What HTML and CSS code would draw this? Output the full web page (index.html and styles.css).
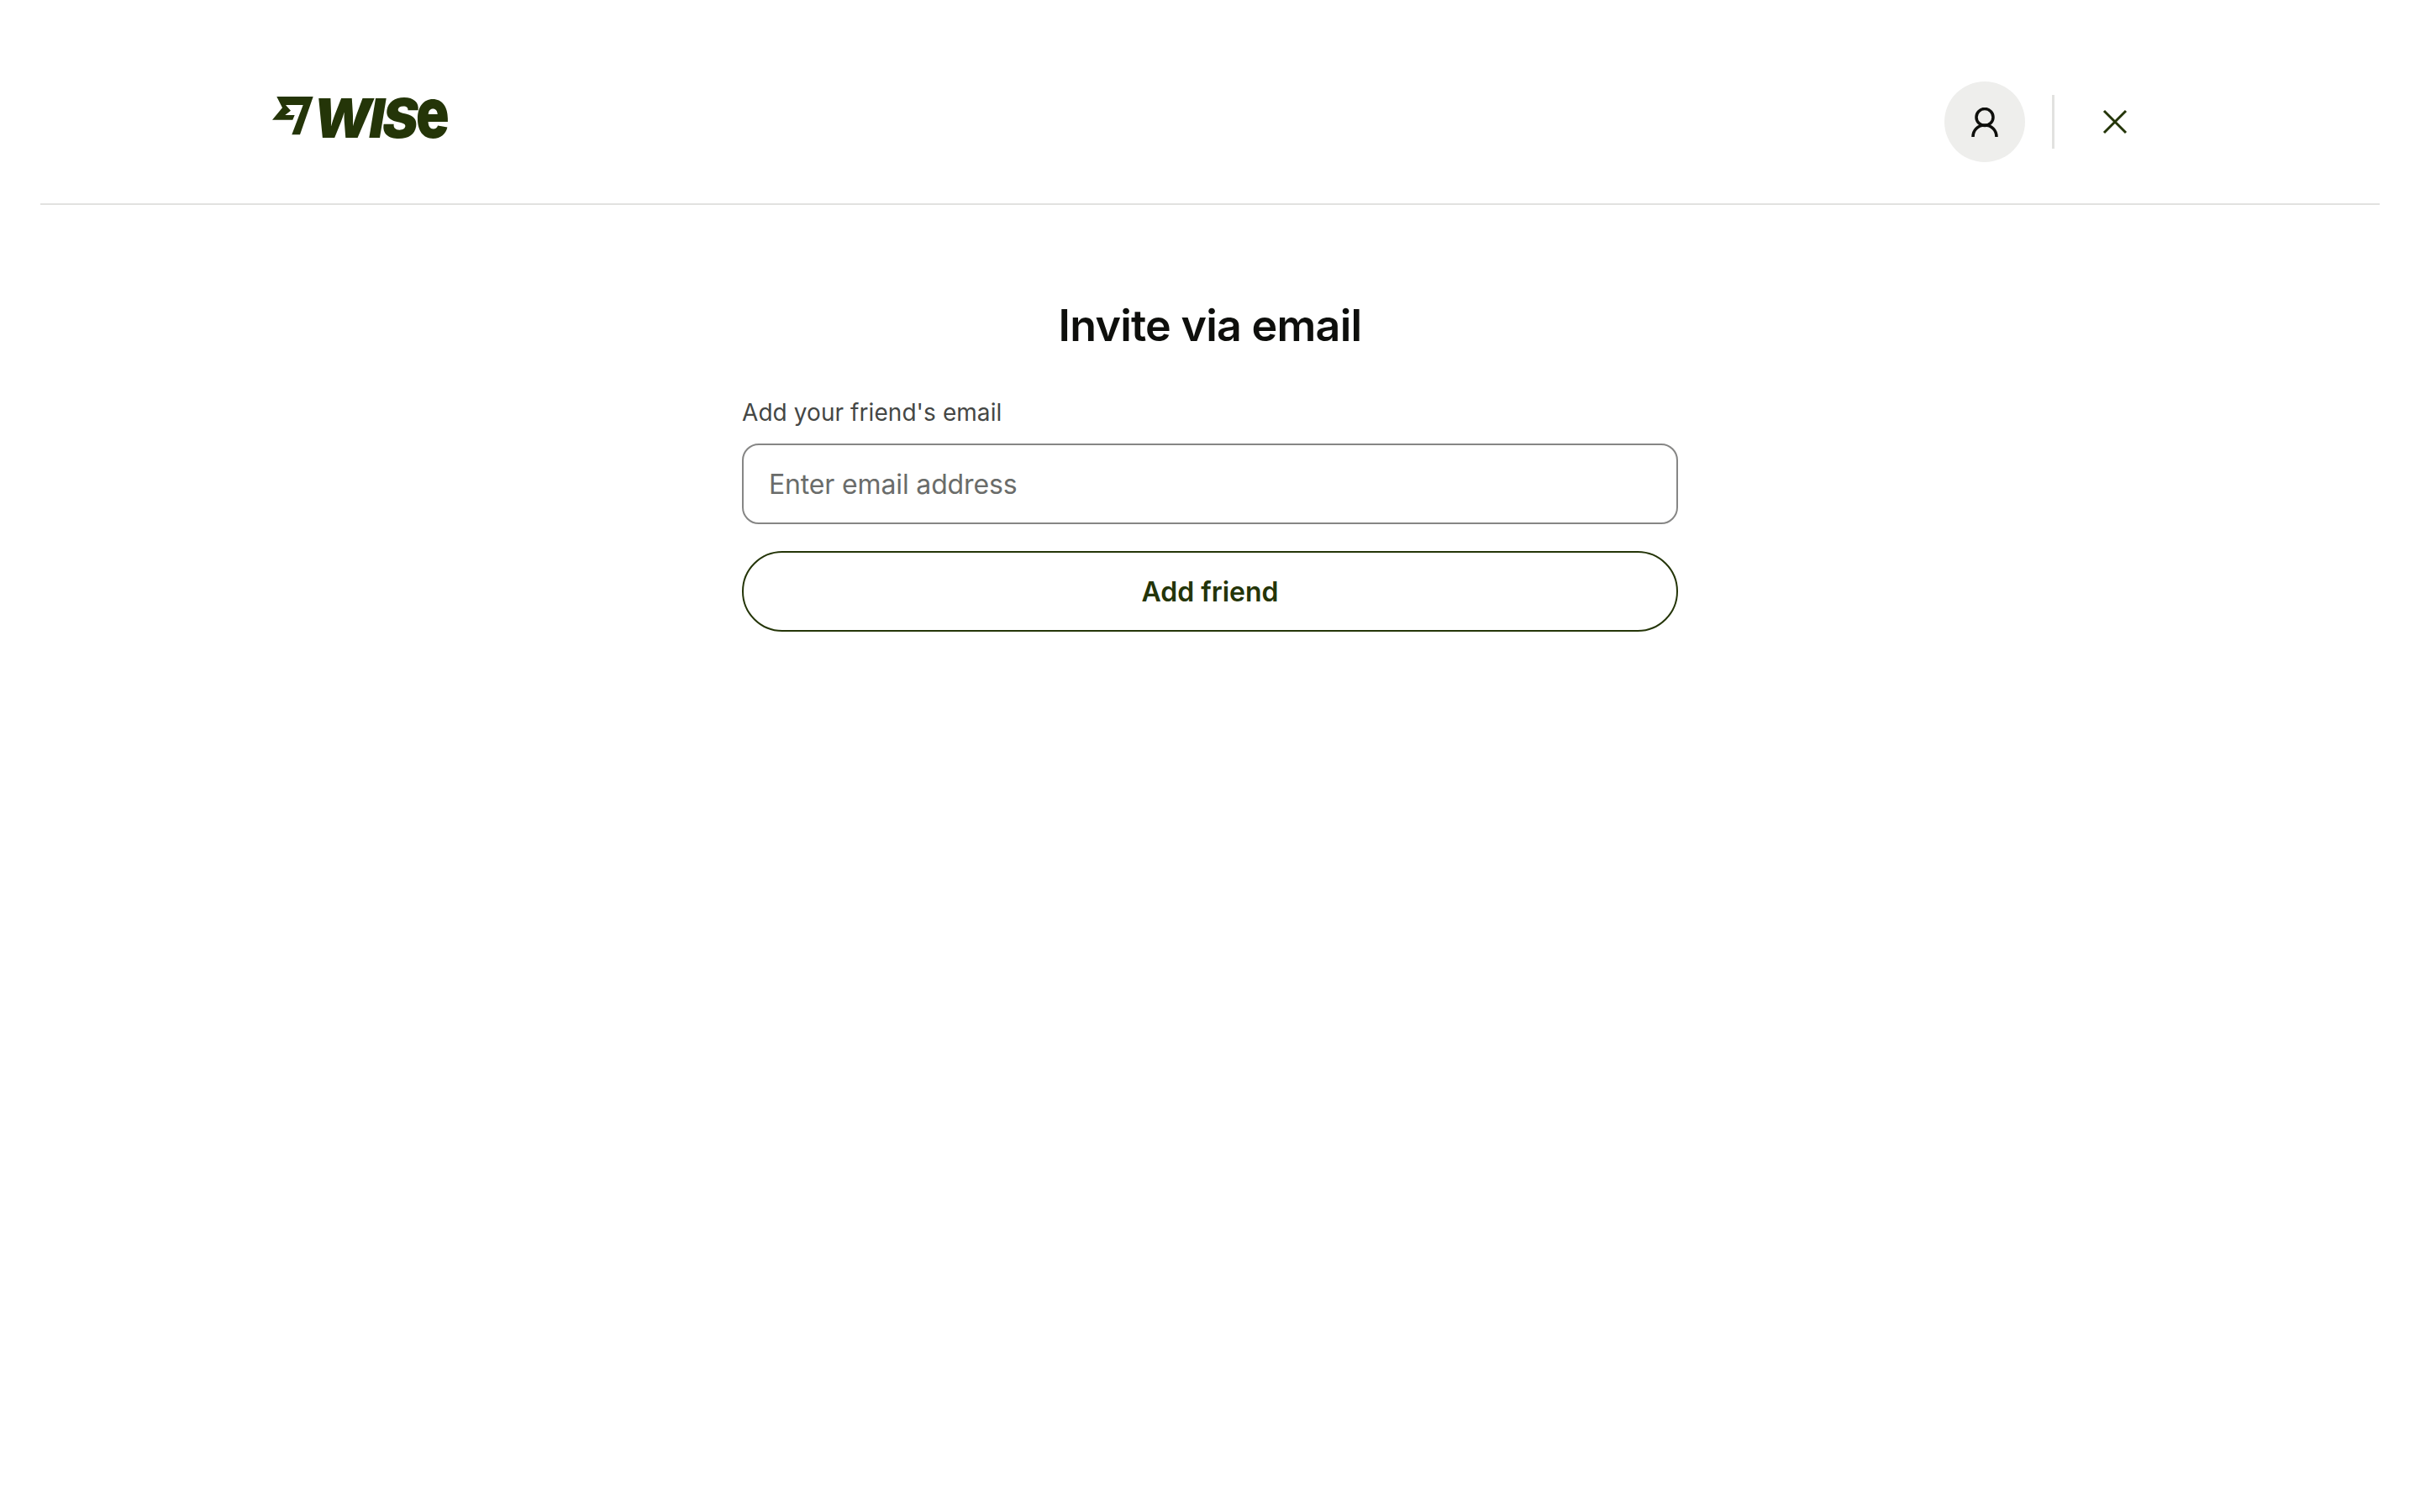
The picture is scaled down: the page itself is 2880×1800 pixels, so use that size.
FILE: index.html
```html
<!DOCTYPE html>
<html lang="en">

<head>
    <meta charset="UTF-8">
    <title>Invite via email</title>

    <link rel="stylesheet" href="styles.css">
</head>

<body>

    <header class="topbar">
        <a class="logo" href="#">
            <svg class="logo-flag" viewBox="0 0 49 46">
                <polygon points="5.300,0 48.700,0 33,45.300 23.300,45.300 36.700,10 16,10 22,16.700 15.300,22 26.700,22 24.300,27.700 0,27.700 12,13.300"></polygon>
            </svg>
            <span class="logo-word">WIS<span class="logo-e">e</span></span>
        </a>

        <div class="actions">
            <button class="avatar">
                <svg viewBox="0 0 32 35">
                    <circle cx="16" cy="11.500" r="10"></circle>
                    <path d="M2 35c0-8 6-14 14-14s14 6 14 14"></path>
                </svg>
            </button>
            <span class="sep"></span>
            <button class="close">
                <svg viewBox="0 0 32 32">
                    <path d="M3 3l26 26M29 3L3 29"></path>
                </svg>
            </button>
        </div>
    </header>

    <main class="invite">
        <h1>Invite via email</h1>
        <label class="field-label" for="email">Add your friend's email</label>
        <input class="field" id="email" type="text" placeholder="Enter email address">
        <button class="add">Add friend</button>
    </main>

</body>

</html>
```

FILE: styles.css
```css
body {
    margin: 0;
    background: #fff;
    font-family: Inter, "Liberation Sans", sans-serif;
}

.topbar {
    height: 145px;
    margin: 0 48px;
    padding: 97px 299px 0 276px;
    border-bottom: 2px solid #e2e2e0;
    display: flex;
    justify-content: space-between;
    align-items: flex-start;
}

.logo {
    display: flex;
    align-items: flex-start;
    gap: 0;
    margin-top: 18px;
    color: #243508;
    text-decoration: none;
}

.logo-flag {
    width: 49px;
    height: 46px;
    fill: #243508;
}

.logo-word {
    margin-top: -5px;
    font-size: 64px;
    line-height: 48px;
    font-weight: 900;
    font-style: italic;
    letter-spacing: -3px;
    white-space: nowrap;
}

.logo-e {
    display: inline-block;
    font-size: 84px;
    font-style: normal;
    letter-spacing: 0;
    transform: scaleX(.78);
    transform-origin: left;
    margin-right: -12px;
}

.actions {
    display: flex;
    align-items: center;
}

.actions button {
    border: 0;
    padding: 0;
    background: none;
    display: flex;
    align-items: center;
    justify-content: center;
}

.actions .avatar {
    width: 96px;
    height: 96px;
    border-radius: 50%;
    background: #eeeeec;
}

.avatar svg {
    width: 32px;
    height: 35px;
    fill: none;
    stroke: #0e0f0c;
    stroke-width: 3.500;
}

.sep {
    width: 3px;
    height: 64px;
    margin: 0 56px 0 32px;
    background: #e2e2e0;
}

.close svg {
    width: 32px;
    height: 32px;
    fill: none;
    stroke: #243508;
    stroke-width: 3;
}

.invite {
    width: 1114px;
    margin: 0 auto;
    padding-top: 112px;
    display: flex;
    flex-direction: column;
}

h1 {
    margin: 0 0 51px;
    text-align: center;
    font-size: 52px;
    line-height: 64px;
    font-weight: 600;
    letter-spacing: -0.75px;
    color: #0e0f0c;
}

.field-label {
    font-size: 28px;
    line-height: 40px;
    letter-spacing: 0.07px;
    color: #454745;
    margin-bottom: 17px;
}

.field {
    height: 96px;
    box-sizing: border-box;
    border: 2px solid #868685;
    border-radius: 20px;
    padding: 0 30px;
    font: 32px Inter, "Liberation Sans", sans-serif;
    letter-spacing: -0.15px;
    color: #0e0f0c;
    margin-bottom: 32px;
}

.field::placeholder {
    color: #6a6c6a;
    opacity: 1;
}

.add {
    height: 96px;
    border: 2px solid #243508;
    border-radius: 48px;
    background: #fff;
    font: 600 32px Inter, "Liberation Sans", sans-serif;
    color: #243508;
}
```
